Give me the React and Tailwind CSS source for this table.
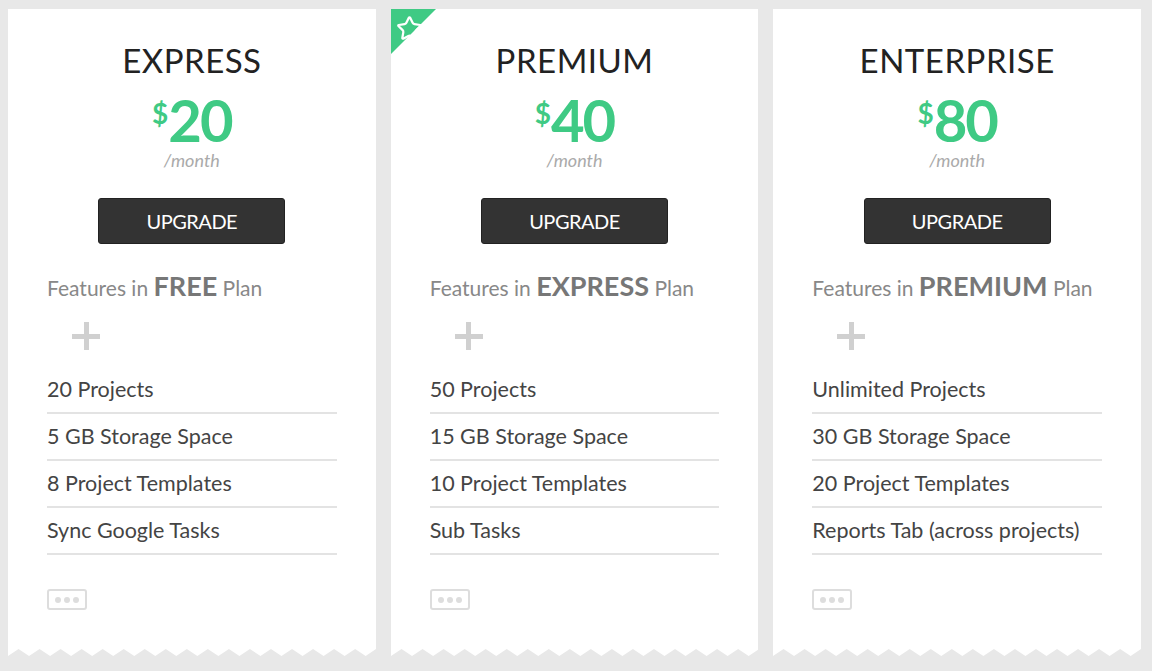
import { Star } from 'lucide-react';

const plans = [
  {
    name: 'EXPRESS',
    price: '20',
    base: 'FREE',
    features: ['20 Projects', '5 GB Storage Space', '8 Project Templates', 'Sync Google Tasks'],
  },
  {
    name: 'PREMIUM',
    price: '40',
    base: 'EXPRESS',
    featured: true,
    features: ['50 Projects', '15 GB Storage Space', '10 Project Templates', 'Sub Tasks'],
  },
  {
    name: 'ENTERPRISE',
    price: '80',
    base: 'PREMIUM',
    features: ['Unlimited Projects', '30 GB Storage Space', '20 Project Templates', 'Reports Tab (across projects)'],
  },
];

function Zigzag() {
  // gray teeth poking up into the card's bottom edge
  const teeth = [];
  for (let x = 0; x < 380; x += 21) teeth.push(`${x},8 ${x + 10.5},1 ${x + 21},8`);
  return (
    <svg className="absolute bottom-0 left-0 h-2 w-full" viewBox="0 0 367 8" preserveAspectRatio="none">
      <polygon points={`0,8 ${teeth.join(' ')} 380,8`} fill="#e8e8e8" />
    </svg>
  );
}

function PlanCard({ plan }) {
  return (
    <div className="relative flex h-[647px] flex-1 flex-col bg-white px-[39px] pt-[29px]">
      {plan.featured && (
        <div className="absolute left-0 top-0 h-[45px] w-[45px]">
          <svg viewBox="0 0 45 45" className="h-full w-full">
            <polygon points="0,0 45,0 0,45" fill="#3fca84" />
          </svg>
          <Star size={27} strokeWidth={2} className="absolute left-[5px] top-[6px] text-white" />
        </div>
      )}
      <h2 className="text-center text-[33px] leading-[44px] tracking-[0.5px] text-[#222]">{plan.name}</h2>
      <div className="mt-[14px] flex h-[48px] items-start justify-center text-[#3fca84]">
        <span className="mt-[3px] text-[28px] font-bold leading-none">$</span>
        <span className="text-[58px] font-bold leading-[48px] tracking-[-2px]">{plan.price}</span>
      </div>
      <p className="mt-[4px] text-center text-[18px] italic leading-[24px] text-[#aaa]">/month</p>
      <div className="mt-[26px] flex justify-center">
        <button type="button" className="h-[46px] w-[187px] rounded-[3px] border border-[#222] bg-[#333] text-[20px] tracking-[-0.5px] text-white">
          UPGRADE
        </button>
      </div>
      <p className="mt-[26px] text-[21px] leading-[32px] text-[#888]">
        Features in <span className="text-[27px] font-bold text-[#777]">{plan.base}</span> Plan
      </p>
      <div className="relative ml-[25px] mt-[18px] h-[28px] w-[28px]">
        <span className="absolute left-0 top-[11.5px] h-[5px] w-[28px] bg-[#d0d0d0]" />
        <span className="absolute left-[11.5px] top-0 h-[28px] w-[5px] bg-[#d0d0d0]" />
      </div>
      <ul className="mt-[17px]">
        {plan.features.map((f) => (
          <li key={f} className="border-b-2 border-[#e3e3e3] py-[9px] text-[21.5px] leading-[27px] text-[#444]">
            {f}
          </li>
        ))}
      </ul>
      <div className="mt-[34px] flex h-[21px] w-[40px] items-center justify-center gap-[3px] rounded-[3px] border-2 border-[#ddd]">
        <span className="h-[6px] w-[6px] rounded-full bg-[#ddd]" />
        <span className="h-[6px] w-[6px] rounded-full bg-[#ddd]" />
        <span className="h-[6px] w-[6px] rounded-full bg-[#ddd]" />
      </div>
      <Zigzag />
    </div>
  );
}

export default function App() {
  return (
    <div className="flex h-[671px] w-[1152px] gap-[15px] overflow-hidden bg-[#e8e8e8] pl-2 pr-[11px] pt-[9px] font-['Lato',sans-serif]">
      {plans.map((p) => (
        <PlanCard key={p.name} plan={p} />
      ))}
    </div>
  );
}
